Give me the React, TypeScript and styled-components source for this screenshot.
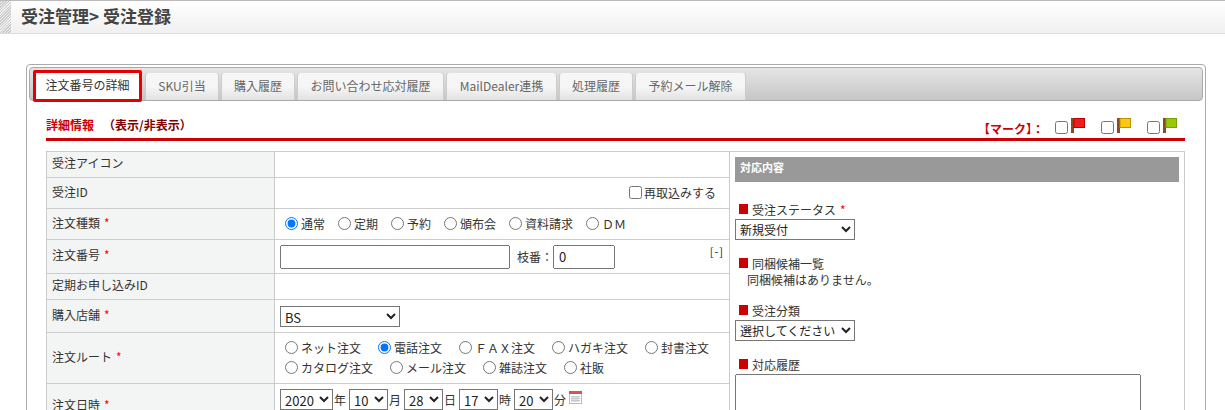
import React from 'react';
import styled, { createGlobalStyle } from 'styled-components';

const GlobalStyle = createGlobalStyle`
  html, body {
    margin: 0;
    padding: 0;
    height: 410px;
    overflow: hidden;
    background: #fff;
    font-family: "Noto Sans CJK JP", "Liberation Sans", sans-serif;
    font-size: 12px;
    line-height: 16px;
    color: #333;
  }
`;

const PageHeader = styled.header`
  height: 32px;
  display: flex;
  align-items: stretch;
  border-top: 1px solid #bbb;
  border-bottom: 1px solid #ddd;
  background: linear-gradient(#fff, #f0f0f0);
`;

const Hatch = styled.div`
  width: 11px;
  background: repeating-linear-gradient(135deg, #ccc 0 1px, #eee 1px 2px);
`;

const PageTitle = styled.h1`
  margin: 0 0 0 10px;
  font-size: 17px;
  line-height: 30px;
  font-weight: 700;
  color: #444;
`;

const Main = styled.main`
  padding: 30px 19px 0 26px;
`;

const Panel = styled.section`
  box-sizing: border-box;
  width: 1180px;
  height: 500px;
  padding: 2px;
  border: 1px solid #aaa;
  border-radius: 4px;
`;

const TabBar = styled.nav`
  box-sizing: border-box;
  height: 34px;
  padding: 3px 0 0 3px;
  display: flex;
  gap: 4px;
  border: 1px solid #aaa;
  border-radius: 4px;
  background: linear-gradient(#e5e5e5, #c6c6c6);
`;

const Tab = styled.div<{ $active?: boolean; $w: number }>`
  box-sizing: border-box;
  flex: none;
  width: ${p => p.$w}px;
  display: flex;
  align-items: center;
  justify-content: center;
  padding-bottom: 2px;
  ${p =>
    p.$active
      ? `
    height: 32px;
    margin-top: -1px;
    border: 3px solid #e60000;
    border-radius: 2px;
    background: #fff;
    color: #333;
    position: relative;
  `
      : `
    height: 27px;
    margin-top: 2px;
    border-radius: 3px 3px 0 0;
    background: linear-gradient(#f6f6f6 50%, #e2e2e2);
    color: #666;
    box-shadow: 1px 0 0 #ccc, -1px 0 0 #ccc;
  `}
`;

const Content = styled.div`
  padding: 0 18px 0 17px;
`;

const SectionBar = styled.div`
  box-sizing: border-box;
  height: 40px;
  display: flex;
  align-items: flex-start;
  justify-content: space-between;
  border-bottom: 3px solid #cc0000;
`;

const SectionTitle = styled.div`
  padding-top: 16px;
  font-size: 12px;
  line-height: 16px;
  font-weight: 700;
  color: #cc0000;
`;

const ToggleLink = styled.span`
  margin-left: 9px;
  color: #800000;
`;

const MarkGroup = styled.div`
  display: flex;
  align-items: flex-start;
  padding: 17px 8px 0 0;
`;

const MarkLabel = styled.span`
  margin: 3px 11px 0 0;
  font-size: 12px;
  line-height: 16px;
  font-weight: 700;
  color: #cc0000;
`;

const Mark = styled.label`
  display: flex;
  align-items: flex-start;
  margin-left: 16px;
  &:first-of-type {
    margin-left: 0;
  }
`;

const MarkBox = styled.input`
  width: 13px;
  height: 13px;
  margin: 3px 3px 0 0;
`;

const FormTable = styled.table`
  width: 1139px;
  margin-top: 10px;
  border-collapse: collapse;
  table-layout: fixed;
`;

const LabelCell = styled.th`
  box-sizing: border-box;
  width: 228px;
  padding: 0 5px 3px;
  border: 1px solid #ccc;
  background: #f3f5f5;
  font-weight: 400;
  text-align: left;
  vertical-align: middle;
`;

const ValueCell = styled.td<{ $h: number }>`
  box-sizing: border-box;
  width: 455px;
  height: ${p => p.$h}px;
  padding: 0 5px;
  border: 1px solid #ccc;
  vertical-align: middle;
`;

const SideCell = styled.td`
  padding: 5px;
  border: 1px solid #ccc;
  vertical-align: top;
`;

const Required = styled.span`
  margin-left: 4px;
  color: #f00;
`;

const Right = styled.div`
  display: flex;
  justify-content: flex-end;
  align-items: center;
  padding-right: 8px;
`;

const Line = styled.div<{ $gap: number }>`
  display: flex;
  align-items: center;
  height: 20px;
  padding-left: 5px;
  gap: ${p => p.$gap}px;
`;

const Choice = styled.label`
  display: flex;
  align-items: center;
`;

const Radio = styled.input`
  width: 13px;
  height: 13px;
  margin: 0 3px 2px 0;
`;

const Check = styled.input`
  width: 13px;
  height: 13px;
  margin: 0 2px 2px 0;
`;

const NumberRow = styled.div`
  display: flex;
  align-items: center;
  position: relative;
`;

const TextBox = styled.input<{ $w: number }>`
  box-sizing: border-box;
  width: ${p => p.$w}px;
  height: 24px;
  padding: 1px 4px;
  font: inherit;
  font-size: 13px;
  color: #222;
`;

const BranchLabel = styled.span`
  margin: 0 0 0 7px;
`;

const Collapse = styled.span`
  position: absolute;
  right: 0;
  top: -2px;
  font-size: 11px;
  letter-spacing: 1px;
  color: #224;
`;

const Select = styled.select<{ $w: number; $mt?: number; $fs?: number }>`
  display: block;
  box-sizing: border-box;
  width: ${p => p.$w}px;
  height: 21px;
  margin-top: ${p => p.$mt || 0}px;
  padding: 0;
  font: inherit;
  font-size: ${p => p.$fs || 12}px;
  color: #222;
  background: #fff;
`;

const DateRow = styled.div`
  display: flex;
  align-items: center;
  height: 21px;
  margin-bottom: 14px;
`;

const DateUnit = styled.span`
  width: 16px;
  text-align: left;
  padding-left: 1px;
  box-sizing: border-box;
`;

const CalendarSlot = styled.span`
  display: flex;
  margin-top: -4px;
`;

const SideHeader = styled.div`
  height: 25px;
  padding-left: 5px;
  background: #999;
  color: #fff;
  font-size: 11px;
  line-height: 21px;
  font-weight: 700;
`;

const SideBlock = styled.div<{ $top: number }>`
  margin-top: ${p => p.$top}px;
`;

const SideLabel = styled.div`
  display: flex;
  align-items: center;
  height: 14px;
  padding-left: 4px;
  line-height: 14px;
`;

const Square = styled.span`
  width: 9px;
  height: 10px;
  margin: 0 4px 3px 0;
  background: #cc0000;
`;

const SideNote = styled.div`
  margin-top: 1px;
  padding-left: 12px;
  line-height: 16px;
`;

const MemoBox = styled.textarea`
  display: block;
  box-sizing: border-box;
  width: 406px;
  height: 50px;
  margin: 2px 0 0;
`;

const Flag = ({ color, dark }: { color: string; dark: string }) => (
  <svg width="14" height="15" viewBox="0 0 14 15">
    <rect x="0" y="0" width="3" height="15" fill="#8a4b24" />
    <rect x="3" y="0.5" width="10.5" height="9" fill={color} stroke={dark} />
  </svg>
);

const CalendarIcon = () => (
  <svg width="13" height="13" viewBox="0 0 13 13">
    <rect x="0.5" y="0.5" width="12" height="12" fill="#fff" stroke="#bbb" />
    <rect x="0" y="0" width="13" height="3" fill="#d9534f" />
    <path d="M2 5.5h9M2 7.5h9M2 9.5h9M3 5v6M5 5v6M7 5v6M9 5v6" stroke="#c4c4d4" strokeWidth="1" />
  </svg>
);

const TABS = [
  { label: 'SKU引当', width: 72 },
  { label: '購入履歴', width: 72 },
  { label: 'お問い合わせ応対履歴', width: 145 },
  { label: 'MailDealer連携', width: 109 },
  { label: '処理履歴', width: 72 },
  { label: '予約メール解除', width: 109 },
];
const ORDER_TYPES = ['通常', '定期', '予約', '頒布会', '資料請求', 'ＤＭ'];
const ROUTES_1 = ['ネット注文', '電話注文', 'ＦＡＸ注文', 'ハガキ注文', '封書注文'];
const ROUTES_2 = ['カタログ注文', 'メール注文', '雑誌注文', '社販'];

const DATE_PARTS = [
  { value: '2020', unit: '年', width: 53 },
  { value: '10', unit: '月', width: 39 },
  { value: '28', unit: '日', width: 39 },
  { value: '17', unit: '時', width: 39 },
  { value: '20', unit: '分', width: 39 },
];

export default function App() {
  return (
    <>
      <GlobalStyle />
      <PageHeader>
        <Hatch />
        <PageTitle>受注管理&gt; 受注登録</PageTitle>
      </PageHeader>
      <Main>
        <Panel>
          <TabBar>
            <Tab $active $w={109}>注文番号の詳細</Tab>
            {TABS.map(t => (
              <Tab key={t.label} $w={t.width}>{t.label}</Tab>
            ))}
          </TabBar>
          <Content>
            <SectionBar>
              <SectionTitle>
                詳細情報<ToggleLink>（表示/非表示）</ToggleLink>
              </SectionTitle>
              <MarkGroup>
                <MarkLabel>【マーク】：</MarkLabel>
                <Mark>
                  <MarkBox type="checkbox" />
                  <Flag color="#f01c1c" dark="#c00000" />
                </Mark>
                <Mark>
                  <MarkBox type="checkbox" />
                  <Flag color="#fcc80c" dark="#c09000" />
                </Mark>
                <Mark>
                  <MarkBox type="checkbox" />
                  <Flag color="#98c808" dark="#78a000" />
                </Mark>
              </MarkGroup>
            </SectionBar>
            <FormTable>
              <tbody>
                <tr>
                  <LabelCell>受注アイコン</LabelCell>
                  <ValueCell $h={26} />
                  <SideCell rowSpan={8}>
                    <SideHeader>対応内容</SideHeader>
                    <SideBlock $top={21}>
                      <SideLabel>
                        <Square />
                        受注ステータス<Required>*</Required>
                      </SideLabel>
                      <Select $w={120} $mt={2} defaultValue="new">
                        <option value="new">新規受付</option>
                      </Select>
                    </SideBlock>
                    <SideBlock $top={17}>
                      <SideLabel>
                        <Square />
                        同梱候補一覧
                      </SideLabel>
                      <SideNote>同梱候補はありません。</SideNote>
                    </SideBlock>
                    <SideBlock $top={16}>
                      <SideLabel>
                        <Square />
                        受注分類
                      </SideLabel>
                      <Select $w={120} $mt={2} defaultValue="none">
                        <option value="none">選択してください</option>
                      </Select>
                    </SideBlock>
                    <SideBlock $top={17}>
                      <SideLabel>
                        <Square />
                        対応履歴
                      </SideLabel>
                      <MemoBox />
                    </SideBlock>
                  </SideCell>
                </tr>
                <tr>
                  <LabelCell>受注ID</LabelCell>
                  <ValueCell $h={31}>
                    <Right>
                      <Choice>
                        <Check type="checkbox" />
                        再取込みする
                      </Choice>
                    </Right>
                  </ValueCell>
                </tr>
                <tr>
                  <LabelCell>
                    注文種類<Required>*</Required>
                  </LabelCell>
                  <ValueCell $h={31}>
                    <Line $gap={13}>
                      {ORDER_TYPES.map((t, i) => (
                        <Choice key={t}>
                          <Radio type="radio" name="type" defaultChecked={i === 0} />
                          {t}
                        </Choice>
                      ))}
                    </Line>
                  </ValueCell>
                </tr>
                <tr>
                  <LabelCell>
                    注文番号<Required>*</Required>
                  </LabelCell>
                  <ValueCell $h={34}>
                    <NumberRow>
                      <TextBox $w={230} type="text" />
                      <BranchLabel>枝番：</BranchLabel>
                      <TextBox $w={62} type="text" defaultValue="0" />
                      <Collapse>[-]</Collapse>
                    </NumberRow>
                  </ValueCell>
                </tr>
                <tr>
                  <LabelCell>定期お申し込みID</LabelCell>
                  <ValueCell $h={26} />
                </tr>
                <tr>
                  <LabelCell>
                    購入店舗<Required>*</Required>
                  </LabelCell>
                  <ValueCell $h={33}>
                    <Select $w={120} $fs={13} defaultValue="bs">
                      <option value="bs">BS</option>
                    </Select>
                  </ValueCell>
                </tr>
                <tr>
                  <LabelCell>
                    注文ルート<Required>*</Required>
                  </LabelCell>
                  <ValueCell $h={51}>
                    <Line $gap={17}>
                      {ROUTES_1.map((t, i) => (
                        <Choice key={t}>
                          <Radio type="radio" name="route" defaultChecked={i === 1} />
                          {t}
                        </Choice>
                      ))}
                    </Line>
                    <Line $gap={17}>
                      {ROUTES_2.map(t => (
                        <Choice key={t}>
                          <Radio type="radio" name="route" />
                          {t}
                        </Choice>
                      ))}
                    </Line>
                  </ValueCell>
                </tr>
                <tr>
                  <LabelCell>
                    注文日時<Required>*</Required>
                  </LabelCell>
                  <ValueCell $h={46}>
                    <DateRow>
                      {DATE_PARTS.map(d => (
                        <React.Fragment key={d.unit}>
                          <Select $w={d.width} $fs={13} defaultValue={d.value}>
                            <option value={d.value}>{d.value}</option>
                          </Select>
                          <DateUnit>{d.unit}</DateUnit>
                        </React.Fragment>
                      ))}
                      <CalendarSlot>
                        <CalendarIcon />
                      </CalendarSlot>
                    </DateRow>
                  </ValueCell>
                </tr>
              </tbody>
            </FormTable>
          </Content>
        </Panel>
      </Main>
    </>
  );
}
